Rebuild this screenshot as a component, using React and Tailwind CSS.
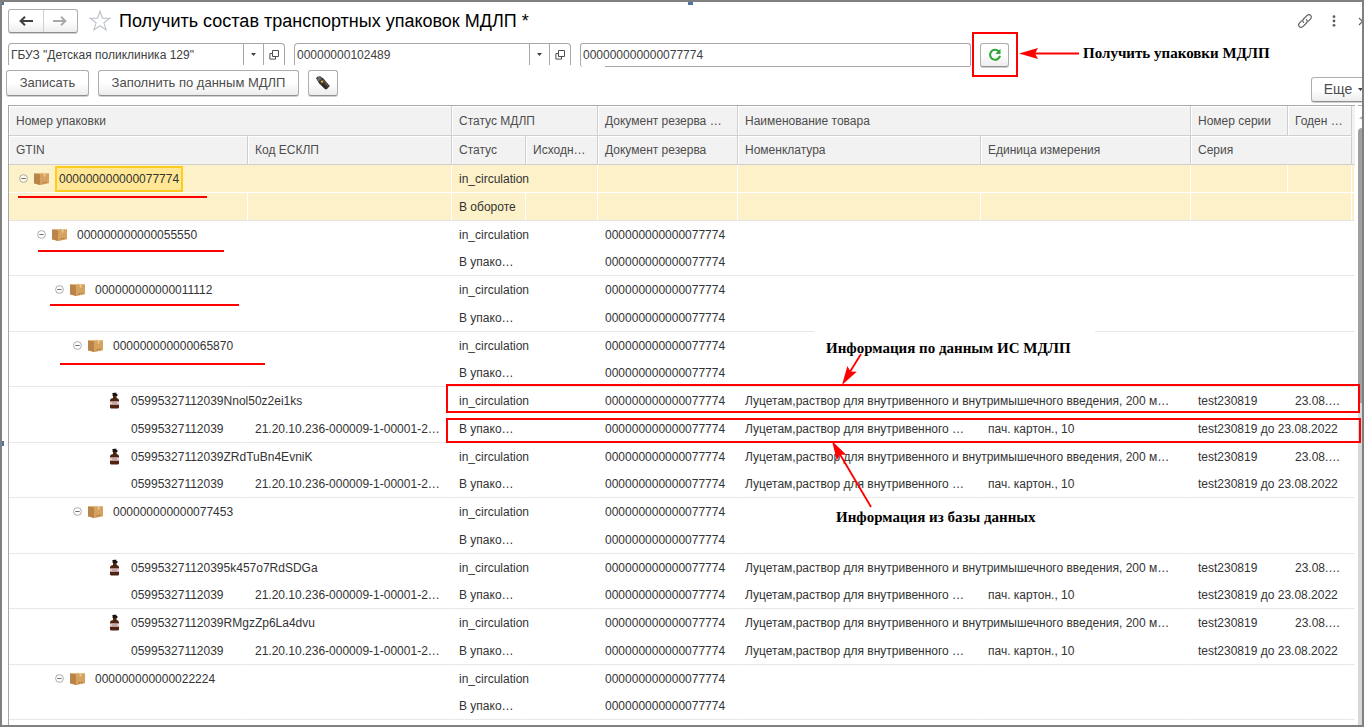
import React from "react";

const CODE = "000000000000077774";
const DRUG_LONG = "Луцетам,раствор для внутривенного и внутримышечного введения, 200 м…";
const DRUG_SHORT = "Луцетам,раствор для внутривенного …";

const rows = [
  { level: 0, name: CODE, state: "В обороте", selected: true },
  { level: 1, name: "000000000000055550", state: "В упако…" },
  { level: 2, name: "000000000000011112", state: "В упако…" },
  { level: 3, name: "000000000000065870", state: "В упако…" },
  { level: 4, name: "05995327112039Nnol50z2ei1ks", state: "В упако…", leaf: true },
  { level: 4, name: "05995327112039ZRdTuBn4EvniK", state: "В упако…", leaf: true },
  { level: 3, name: "000000000000077453", state: "В упако…" },
  { level: 4, name: "059953271120395k457o7RdSDGa", state: "В упако…", leaf: true },
  { level: 4, name: "05995327112039RMgzZp6La4dvu", state: "В упако…", leaf: true },
  { level: 2, name: "000000000000022224", state: "В упако…" },
];

const indents = ["pl-2.5", "pl-7", "pl-[46px]", "pl-16", "pl-[98px]"];

function BoxIcon() {
  return (
    <svg width="17" height="14" viewBox="0 0 17 14" className="shrink-0" aria-hidden="true">
      <path d="M1 1.5 8 1 16 1.5V10.5L7 13 1 10.5Z" fill="#d8a765" />
      <path d="M1 1.5 7 2V13L1 11.5Z" fill="#b9834a" />
      <path d="M7 2 16 1.5V11.2L7 13Z" fill="#d6a25f" />
      <path d="M1 1.5 9 .8 16 1.5 7 2.2Z" fill="#e3bd84" />
      <path d="M10.5 1.2 12.5 1.1V4.5L10.8 4.7Z" fill="#e9ca96" />
      <path d="M9.5 11 14.5 10" stroke="#9b6c36" strokeWidth="1" strokeDasharray="1.5 1" />
    </svg>
  );
}

function BottleIcon() {
  return (
    <svg width="11" height="17" viewBox="0 0 11 17" className="shrink-0" aria-hidden="true">
      <path d="M3.2 1.2Q3.2 .8 5 .8H7.4V2H8.4V4H3.6V2.2Z" fill="#17120f" />
      <path d="M4 3.8H7.6V6Q10 6.6 10 8.2V15.6Q10 16.4 9 16.4H2Q1 16.4 1 15.6V8.2Q1 6.6 4 6Z" fill="#4d2412" />
      <path d="M1 9.4H10V12.8H1Z" fill="#e4d2d2" />
      <path d="M1 9.8H10M1 12.4H10" stroke="#c98f8c" strokeWidth=".7" />
      <path d="M3 11.1H8" stroke="#8d8388" strokeWidth=".8" />
    </svg>
  );
}

function Collapse() {
  return (
    <button type="button" aria-label="Свернуть" className="flex h-4 w-[9px] shrink-0 items-center">
      <svg width="9" height="9" viewBox="0 0 9 9">
        <circle cx="4.5" cy="4.5" r="3.9" fill="#fff" fillOpacity=".5" stroke="#a3a3a3" strokeWidth=".9" />
        <path d="M2.3 4.5H6.7" stroke="#707070" strokeWidth="1" />
      </svg>
    </button>
  );
}

function OpenIcon() {
  return (
    <svg width="10" height="10" viewBox="0 0 10 10" fill="none" stroke="#505050" strokeWidth="1">
      <path d="M3.5 .5H9.5V6.5H3.5Z" />
      <path d="M3.5 3.5H.9V9.1H6.5V6.5" />
    </svg>
  );
}

function Caret() {
  return (
    <svg width="5" height="3" viewBox="0 0 5 3">
      <path d="M0 0H5L2.5 3Z" fill="#404040" />
    </svg>
  );
}

function PickField({ label, value }) {
  return (
    <div className="flex h-[22px] w-[277px] shrink-0 rounded-t border-x border-t border-[#a8a8a8]">
      <input aria-label={label} defaultValue={value} className="min-w-0 flex-1 bg-transparent px-0.5 outline-none" />
      <button type="button" aria-label={label + ": список"} className="flex w-[20px] items-center justify-center border-l border-[#a8a8a8]">
        <Caret />
      </button>
      <button type="button" aria-label={label + ": открыть"} className="flex w-[21px] items-center justify-center border-l border-[#a8a8a8]">
        <OpenIcon />
      </button>
    </div>
  );
}

const btn = "flex items-center justify-center rounded-[3px] border border-[#adadad] border-b-[#8f8f8f] bg-linear-to-b from-white from-50% to-[#ededed] shadow-[0_1px_0_#d0d0d0]";

function Head({ children, span }) {
  return (
    <th colSpan={span} className="overflow-hidden border-r border-b border-[#cfcfcf] bg-[#f2f2f2] pl-[7px] text-left font-normal whitespace-nowrap text-[#4d4d4d] shadow-[inset_1px_1px_0_#fff]">
      {children}
    </th>
  );
}

function Cell({ children, span, selected, last, pad = "pl-[7px]" }) {
  const line = selected
    ? last ? "border-r border-r-white border-b border-b-[#e4e4e4] bg-[#fdf1c9]" : "border-r border-b border-white bg-[#fdf1c9]"
    : last ? "border-r border-r-transparent border-b border-b-[#e8e8e8]" : "border-r border-b border-transparent";
  return (
    <td colSpan={span} className={"overflow-hidden whitespace-nowrap " + line + " " + pad}>
      {children}
    </td>
  );
}

function Item({ row, index }) {
  const s = row.selected;
  return (
    <>
      <tr className="h-7">
        <Cell span={2} selected={s} pad={indents[row.level]}>
          <div className="flex h-[26px] items-center">
            {row.leaf ? (
              <span className="mr-[9px] flex w-[15px] justify-center"><BottleIcon /></span>
            ) : (
              <>
                <Collapse />
                <span className="mr-[5px] ml-[5px] flex"><BoxIcon /></span>
              </>
            )}
            {s ? (
              <span className="flex h-[26px] items-center border-2 border-[#ffcb1f] bg-[#ffe795] px-0.5">{row.name}</span>
            ) : (
              <span className={row.leaf ? "" : "pl-1"}>{row.name}</span>
            )}
          </div>
        </Cell>
        <Cell span={2} selected={s}>in_circulation</Cell>
        <Cell selected={s}>{!s && CODE}</Cell>
        <Cell span={2} selected={s}>{row.leaf && DRUG_LONG}</Cell>
        <Cell selected={s}>{row.leaf && "test230819"}</Cell>
        <Cell selected={s}>{row.leaf && "23.08.…"}</Cell>
        <Cell selected={s} />
      </tr>
      <tr className={index % 2 ? "h-[27px]" : "h-7"}>
        <Cell selected={s} last pad={row.leaf ? "pl-[122px]" : "pl-[7px]"}>{row.leaf && "05995327112039"}</Cell>
        <Cell selected={s} last>{row.leaf && "21.20.10.236-000009-1-00001-2…"}</Cell>
        <Cell selected={s} last>{row.state}</Cell>
        <Cell selected={s} last />
        <Cell selected={s} last>{!s && CODE}</Cell>
        <Cell selected={s} last>{row.leaf && DRUG_SHORT}</Cell>
        <Cell selected={s} last>{row.leaf && "пач. картон., 10"}</Cell>
        <Cell span={2} selected={s} last>{row.leaf && "test230819 до 23.08.2022"}</Cell>
        <Cell selected={s} last />
      </tr>
    </>
  );
}

function Annotations() {
  const note = "absolute font-['Liberation_Serif',serif] text-[15px] leading-5 font-bold whitespace-nowrap text-black";
  return (
    <div className="pointer-events-none absolute inset-0">
      <div className="absolute top-8 left-[972px] h-[45px] w-[46px] border-2 border-[#fe0000]" />
      <div className={note + " top-[43px] left-[1083px]"}>Получить упаковки МДЛП</div>
      <div className="absolute top-[196px] left-[18px] h-0.5 w-[189px] bg-[#fe0000]" />
      <div className="absolute top-[250px] left-[38px] h-0.5 w-[186px] bg-[#fe0000]" />
      <div className="absolute top-[304px] left-[50px] h-0.5 w-[189px] bg-[#fe0000]" />
      <div className="absolute top-[363px] left-[60px] h-0.5 w-[205px] bg-[#fe0000]" />
      <div className={note + " top-[328px] left-[814px] w-[281px] bg-white pt-[10px] pl-3"}>Информация по данным ИС МДЛП</div>
      <div className="absolute top-[384px] left-[446px] h-[29px] w-[914px] border-2 border-[#fe0000]" />
      <div className="absolute top-[418px] left-[446px] h-[25px] w-[915px] border-2 border-[#fe0000]" />
      <div className={note + " top-[507px] left-[836px]"}>Информация из базы данных</div>
      <svg className="absolute inset-0" width="1364" height="727" viewBox="0 0 1364 727" aria-hidden="true">
        <defs>
          <path id="arrowhead" d="M0 0 19-5.5 16 0 19 5.5Z" fill="#fe0000" />
        </defs>
        <g stroke="#fe0000" strokeWidth="1.8">
          <path d="M1030 53.5H1079" />
          <path d="M848 375 861 354" />
          <path d="M838 451 871 507" />
        </g>
        <use href="#arrowhead" transform="translate(1019 53.5)" />
        <use href="#arrowhead" transform="translate(842 385) rotate(-58)" />
        <use href="#arrowhead" transform="translate(832 441) rotate(60)" />
      </svg>
      <div className="absolute top-0.5 left-[688px] h-[3px] w-[5px] bg-[#4f74a3]" />
      <div className="absolute top-0.5 left-0.5 h-[3px] w-0.5 bg-[#4f74a3]" />
      <div className="absolute top-[441px] left-0.5 h-[5px] w-0.5 bg-[#4f74a3]" />
    </div>
  );
}

export default function App() {
  return (
    <div className="relative flex h-screen flex-col overflow-hidden bg-white font-['Liberation_Sans',Arial,sans-serif] text-[12px] text-[#333]">
      <header className="flex h-[42px] shrink-0 items-center pl-2">
        <div className="flex h-6 w-[70px] rounded-[3px] border border-[#adadad] border-b-[#8f8f8f] bg-linear-to-b from-white from-50% to-[#ededed] shadow-[0_1px_0_#d0d0d0]">
          <button type="button" aria-label="Назад" className="flex flex-1 items-center justify-center border-r border-[#d0d0d0]">
            <svg width="14" height="10" viewBox="0 0 14 10" fill="none" stroke="#404040" strokeWidth="2"><path d="M14 5H2M6 .8 1.6 5 6 9.2" /></svg>
          </button>
          <button type="button" aria-label="Вперед" className="flex flex-1 items-center justify-center">
            <svg width="14" height="10" viewBox="0 0 14 10" fill="none" stroke="#a9a9a9" strokeWidth="2"><path d="M0 5H12M8 .8 12.4 5 8 9.2" /></svg>
          </button>
        </div>
        <button type="button" aria-label="В избранное" className="ml-[11px]">
          <svg width="22" height="22" viewBox="0 0 22 22" fill="#fff" stroke="#b9c0c9" strokeWidth="1.1">
            <path d="M11 1.2 13.4 8.2 20.8 8.3 14.9 12.8 17.1 19.9 11 15.7 4.9 19.9 7.1 12.8 1.2 8.3 8.6 8.2Z" />
          </svg>
        </button>
        <h1 className="ml-2 flex-1 text-[18px] whitespace-nowrap text-black">Получить состав транспортных упаковок МДЛП *</h1>
        <button type="button" aria-label="Ссылка">
          <svg width="16" height="16" viewBox="0 0 16 16" fill="none" stroke="#606060" strokeWidth="1.2" strokeLinecap="round">
            <path d="M6.6 9.4C5.5 8.3 5.5 7 6.5 6L9.9 2.6C11 1.5 12.5 1.3 13.6 2.4 14.7 3.5 14.5 5 13.4 6.1L11.4 8.1" />
            <path d="M9.4 6.6C10.5 7.7 10.5 9 9.5 10L6.1 13.4C5 14.5 3.5 14.7 2.4 13.6 1.3 12.5 1.5 11 2.6 9.9L4.6 7.9" />
          </svg>
        </button>
        <button type="button" aria-label="Меню" className="ml-[19px]">
          <svg width="4" height="12" viewBox="0 0 4 12" fill="#606060"><circle cx="2" cy="1.7" r="1.4" /><circle cx="2" cy="6" r="1.4" /><circle cx="2" cy="10.3" r="1.4" /></svg>
        </button>
        <button type="button" aria-label="Закрыть" className="ml-[22px] w-[6px] overflow-hidden">
          <svg width="9" height="9" viewBox="0 0 9 9" stroke="#606060" strokeWidth="1.2"><path d="M1 1 8 8M8 1 1 8" /></svg>
        </button>
      </header>

      <div className="flex h-[26px] shrink-0 gap-[9px] pt-px pl-2 text-[#404040]">
        <PickField label="Организация" value={'ГБУЗ "Детская поликлиника 129"'} />
        <PickField label="Место деятельности" value="00000000102489" />
        <div className="relative h-6 w-[391px] rounded-[3px] border-x border-t border-[#a8a8a8]">
          <input aria-label="Номер упаковки" defaultValue={CODE} className="block h-[22px] w-full bg-transparent px-0.5 outline-none" />
          <span className="absolute right-0 bottom-0 left-6 h-px bg-[#a8a8a8]" />
        </div>
        <button type="button" aria-label="Получить упаковки" className={btn + " h-6 w-[29px]"}>
          <svg width="14" height="14" viewBox="0 0 14 14" fill="none" stroke="#2fa335" strokeWidth="2.1">
            <path d="M10.6 3.2A5 5 0 1 0 12 7.8" />
            <path d="M12.5 .8V6H7.4Z" fill="#2fa335" stroke="none" />
          </svg>
        </button>
      </div>

      <div className="flex h-[37px] shrink-0 items-start gap-[9px] pt-0.5 pl-1.5 text-[13px] text-[#4d4d4d]">
        <button type="button" className={btn + " h-[26px] w-[83px]"}>Записать</button>
        <button type="button" className={btn + " h-[26px] w-[201px] whitespace-nowrap"}>Заполнить по данным МДЛП</button>
        <button type="button" aria-label="Сканер" className={btn + " h-[26px] w-[30px]"}>
          <svg width="16" height="16" viewBox="0 0 16 16">
            <path d="M1.2 3.6Q1.5 1.2 5.2 1.2L8.4 3.6 14.8 11 11.6 14.6 9.8 14 4 8.2Z" fill="#3b352f" />
            <path d="M2 3.4Q3 1.8 5.2 2L7 3.8 3.6 6.4Z" fill="#6e6961" />
            <path d="M8.5 5.5 13.2 11" stroke="#6d655b" />
            <circle cx="7" cy="6.6" r="1.2" fill="#e2b93a" />
            <path d="M7 9.5 10.8 13.2" stroke="#15110e" />
          </svg>
        </button>
        <button type="button" className={btn + " mt-[7px] -mr-3 ml-auto h-[25px] w-[65px] gap-1.5 text-[14px]"}>
          Еще
          <Caret />
        </button>
      </div>

      <main className="flex min-h-0 flex-1 pr-0.5 pl-2">
        <div className="min-w-0 flex-1 overflow-hidden border-t border-l border-[#a8a8a8]">
          <table className="w-full table-fixed border-separate border-spacing-0">
            <colgroup>
              <col className="w-[239px]" />
              <col className="w-[204px]" />
              <col className="w-[74px]" />
              <col className="w-[72px]" />
              <col className="w-[140px]" />
              <col />
              <col className="w-[210px]" />
              <col className="w-[97px]" />
              <col className="w-[64px]" />
              <col className="w-[3px]" />
            </colgroup>
            <thead>
              <tr className="h-[30px]">
                <Head span={2}>Номер упаковки</Head>
                <Head span={2}>Статус МДЛП</Head>
                <Head>Документ резерва …</Head>
                <Head span={2}>Наименование товара</Head>
                <Head>Номер серии</Head>
                <Head>Годен …</Head>
                <td className="bg-[#f2f2f2]" />
              </tr>
              <tr className="h-[29px]">
                <Head>GTIN</Head>
                <Head>Код ЕСКЛП</Head>
                <Head>Статус</Head>
                <Head>Исходн…</Head>
                <Head>Документ резерва</Head>
                <Head>Номенклатура</Head>
                <Head>Единица измерения</Head>
                <Head span={2}>Серия</Head>
                <td className="border-b border-[#cfcfcf] bg-[#f2f2f2]" />
              </tr>
            </thead>
            <tbody>
              {rows.map((row, i) => (
                <Item key={row.name} row={row} index={i} />
              ))}
            </tbody>
          </table>
        </div>
        <div className="ml-[3px] flex w-1 flex-col overflow-hidden border-t border-[#a8a8a8] bg-white">
          <svg width="8" height="22" viewBox="0 0 8 22" className="shrink-0"><path d="M1 13 5 9 9 13Z" fill="#b0b0b0" /></svg>
          <div className="h-[275px] shrink-0 rounded-tl bg-[#a0a0a0]" />
          <div className="flex-1 bg-[#d8d8d8]" />
        </div>
      </main>

      <div className="pointer-events-none absolute inset-0 border-2 border-[#808080]" />
      <Annotations />
    </div>
  );
}
